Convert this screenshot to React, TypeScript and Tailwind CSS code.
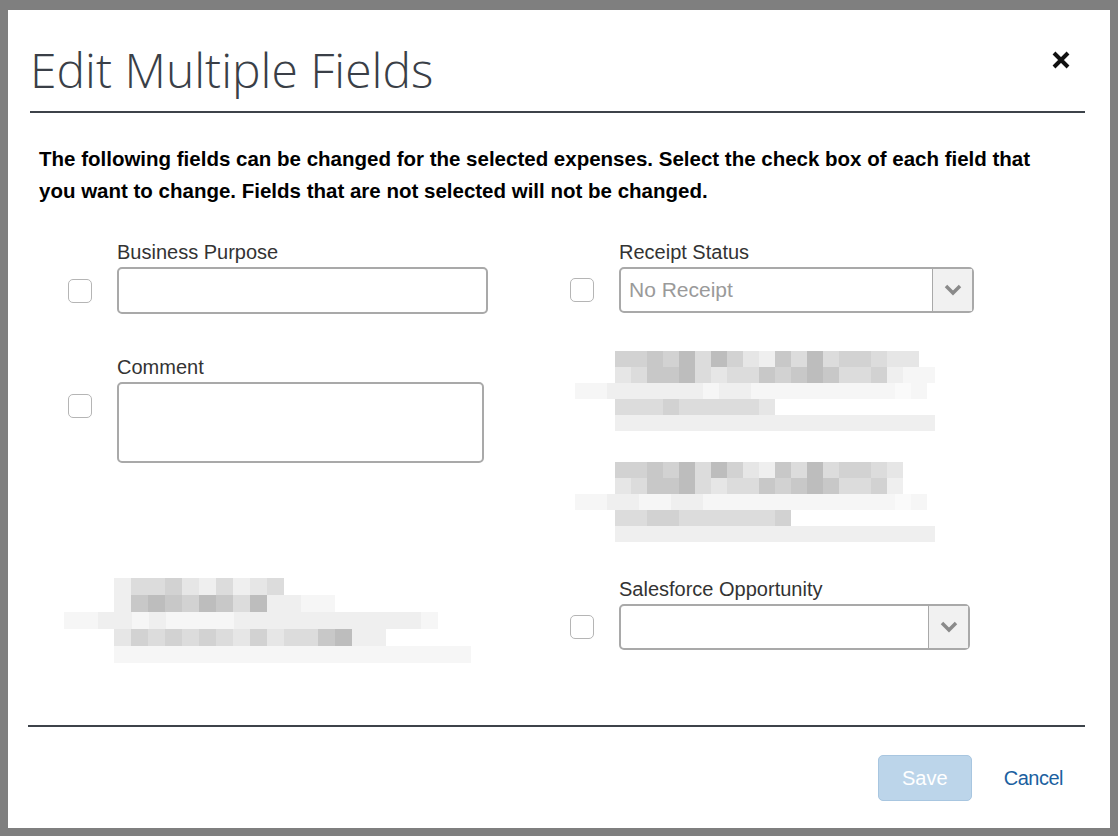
import React from "react";

const grays = ["#c8c8c8", "#d2d2d2", "#dcdcdc", "#e6e6e6", "#efefef", "#f6f6f6", "#bdbdbd", "#fafafa"];

function Pixels({ rows, cell = 16 }: { rows: { offset: number; pattern: string }[]; cell?: number }) {
  return (
    <div className="flex flex-col">
      {rows.map((r, i) => (
        <div key={i} className="flex" style={{ marginLeft: r.offset }}>
          {r.pattern.split("").map((c, j) => (
            <div key={j} style={{ width: cell, height: cell, background: c === "." ? "#ffffff" : grays[Number(c)] }} />
          ))}
        </div>
      ))}
    </div>
  );
}

function Check() {
  return <div className="w-[24px] h-[24px] rounded-[5px] border border-[#b5b5b5] bg-white shrink-0" />;
}

function Select({ value, w }: { value: string; w: string }) {
  return (
    <div className={`${w} h-[46px] rounded-[5px] border-2 border-[#a9a9a9] flex bg-white`}>
      <div className="flex-1 flex items-center px-[8px] text-[21px] text-[#9a9a9a]">{value}</div>
      <div className="w-[40px] border-l border-[#a9a9a9] bg-[#f1f1f1] flex items-center justify-center">
        <svg width="18" height="12" viewBox="0 0 18 12"><path d="M2 2 L9 9 L16 2" stroke="#8a8a8a" strokeWidth="3.5" fill="none" /></svg>
      </div>
    </div>
  );
}

export default function App() {
  const arial = { fontFamily: '"Liberation Sans", Arial, sans-serif' };
  return (
    <div className="w-[1118px] h-[836px] bg-[#7f7f7f] pt-[10px] pl-[8px]" style={arial}>
      <div className="relative w-[1102px] h-[818px] bg-white">
        <div className="pl-[22px] pr-[25px] pt-[30px]">
          <div className="flex justify-between items-start">
            <h1 className="text-[48px] leading-[60px] font-light text-[#3a3f47]" style={{ fontFamily: '"Open Sans", sans-serif' }}>Edit Multiple Fields</h1>
            <svg className="mt-[10px] mr-[14px]" width="20" height="20" viewBox="0 0 20 20"><path d="M3 3 L17 17 M17 3 L3 17" stroke="#111" strokeWidth="4" /></svg>
          </div>
          <div className="mt-[11px] h-[2px] bg-[#3d434a]" />
          <p className="mt-[30px] ml-[9px] w-[1000px] text-[20.5px] leading-[32px] font-bold text-black">
            The following fields can be changed for the selected expenses. Select the check box of each field that you want to change. Fields that are not selected will not be changed.
          </p>
          <div className="mt-[34px] ml-[38px] grid grid-cols-[502px_1fr]">
            <div className="flex flex-col">
              <div className="text-[20px] text-[#333] ml-[49px] leading-[22px]">Business Purpose</div>
              <div className="flex items-center gap-[25px] mt-[4px]">
                <Check />
                <div className="w-[371px] h-[47px] rounded-[5px] border-2 border-[#a9a9a9]" />
              </div>
              <div className="text-[20px] text-[#333] ml-[49px] leading-[22px] mt-[42px]">Comment</div>
              <div className="flex items-start gap-[25px] mt-[4px]">
                <div className="mt-[12px]"><Check /></div>
                <div className="w-[367px] h-[81px] rounded-[5px] border-2 border-[#a9a9a9]" />
              </div>
              <div className="mt-[115px] -ml-[4px]">
                <Pixels cell={17} rows={[
                  { offset: 50, pattern: "4221342432.." },
                  { offset: 50, pattern: "4060160264455" },
                  { offset: 0, pattern: "5544545555444444444445" },
                  { offset: 50, pattern: "3121212313220644" },
                  { offset: 50, pattern: "555555555555555555555" },
                ]} />
              </div>
            </div>
            <div className="flex flex-col">
              <div className="text-[20px] text-[#333] ml-[49px] leading-[22px]">Receipt Status</div>
              <div className="flex items-center gap-[25px] mt-[4px]">
                <Check />
                <Select value="No Receipt" w="w-[355px]" />
              </div>
              <div className="mt-[38px]">
                <Pixels rows={[
                  { offset: 45, pattern: "1101626134026211233" },
                  { offset: 45, pattern: "32006232201060221455" },
                  { offset: 5, pattern: "5544444454455555555575" },
                  { offset: 45, pattern: "2221222223.........." },
                  { offset: 45, pattern: "44444444444444444444" },
                ]} />
              </div>
              <div className="mt-[31px]">
                <Pixels rows={[
                  { offset: 45, pattern: "110162613402621123" },
                  { offset: 45, pattern: "320062322010602214" },
                  { offset: 5, pattern: "5544554455555555555575" },
                  { offset: 45, pattern: "22112222221........." },
                  { offset: 45, pattern: "44444444444444444444" },
                ]} />
              </div>
              <div className="text-[20px] text-[#333] ml-[49px] leading-[22px] mt-[36px]">Salesforce Opportunity</div>
              <div className="flex items-center gap-[25px] mt-[4px]">
                <Check />
                <Select value="" w="w-[351px]" />
              </div>
            </div>
          </div>
        </div>
        <div className="absolute left-[20px] right-[25px] top-[715px] h-[2px] bg-[#3d434a]" />
        <div className="absolute right-[47px] top-[745px] flex items-center gap-[32px]">
          <div className="w-[94px] h-[46px] rounded-[5px] bg-[#bcd5ea] border border-[#a8c6e0] flex items-center justify-center text-[20px] text-white">Save</div>
          <div className="text-[20px] text-[#1b5fa0] tracking-[-0.5px]">Cancel</div>
        </div>
      </div>
    </div>
  );
}
